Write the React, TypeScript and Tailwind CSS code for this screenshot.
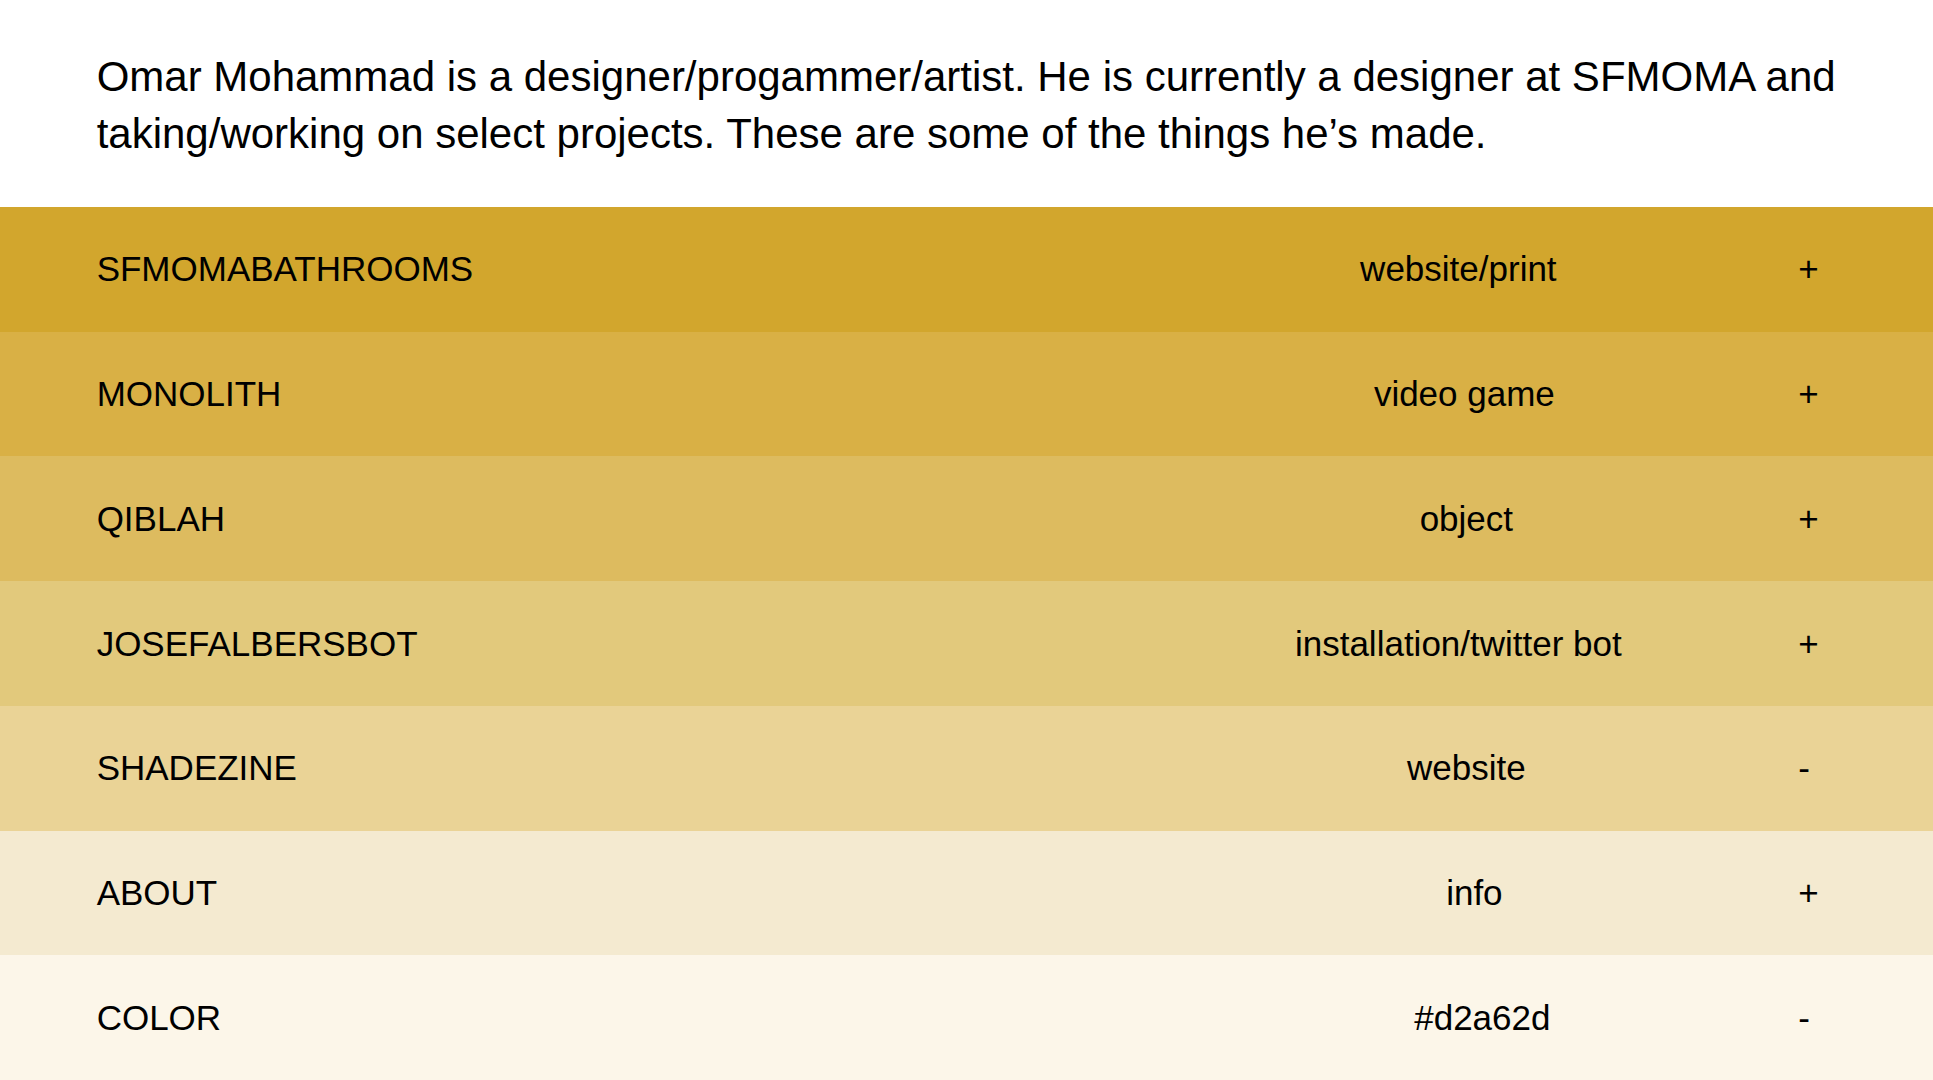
const rows = [
  { name: "SFMOMABATHROOMS", kind: "website/print", sign: "+", bg: "bg-[#d2a62d]", mid: "pl-0" },
  { name: "MONOLITH", kind: "video game", sign: "+", bg: "bg-[#d9b045]", mid: "pl-3" },
  { name: "QIBLAH", kind: "object", sign: "+", bg: "bg-[#ddbb5f]", mid: "pl-4" },
  { name: "JOSEFALBERSBOT", kind: "installation/twitter bot", sign: "+", bg: "bg-[#e2c97c]", mid: "pl-0" },
  { name: "SHADEZINE", kind: "website", sign: "-", bg: "bg-[#ead396]", mid: "pl-4" },
  { name: "ABOUT", kind: "info", sign: "+", bg: "bg-[#f4ead0]", mid: "pl-8" },
  { name: "COLOR", kind: "#d2a62d", sign: "-", bg: "bg-[#fcf6e9]", mid: "pl-12" },
];

export default function App() {
  return (
    <main className="flex min-h-screen flex-col bg-white font-['Liberation_Sans',Arial,sans-serif] text-black">
      <p className="px-[5%] pt-12 pb-[45px] text-[42px] leading-[57px]">
        Omar Mohammad is a designer/progammer/artist. He is currently a designer at SFMOMA and taking/working on select projects. These are some of the things he’s made.
      </p>
      {rows.map((r) => (
        <button
          key={r.name}
          type="button"
          className={`flex w-full flex-1 items-center px-[5%] py-9 text-left text-[35px] leading-[48px] ${r.bg}`}
        >
          <span className="flex-1">{r.name}</span>
          <span className={`w-90 whitespace-nowrap text-center ${r.mid}`}>{r.kind}</span>
          <span className="ml-40 w-[38px]">{r.sign}</span>
        </button>
      ))}
    </main>
  );
}
